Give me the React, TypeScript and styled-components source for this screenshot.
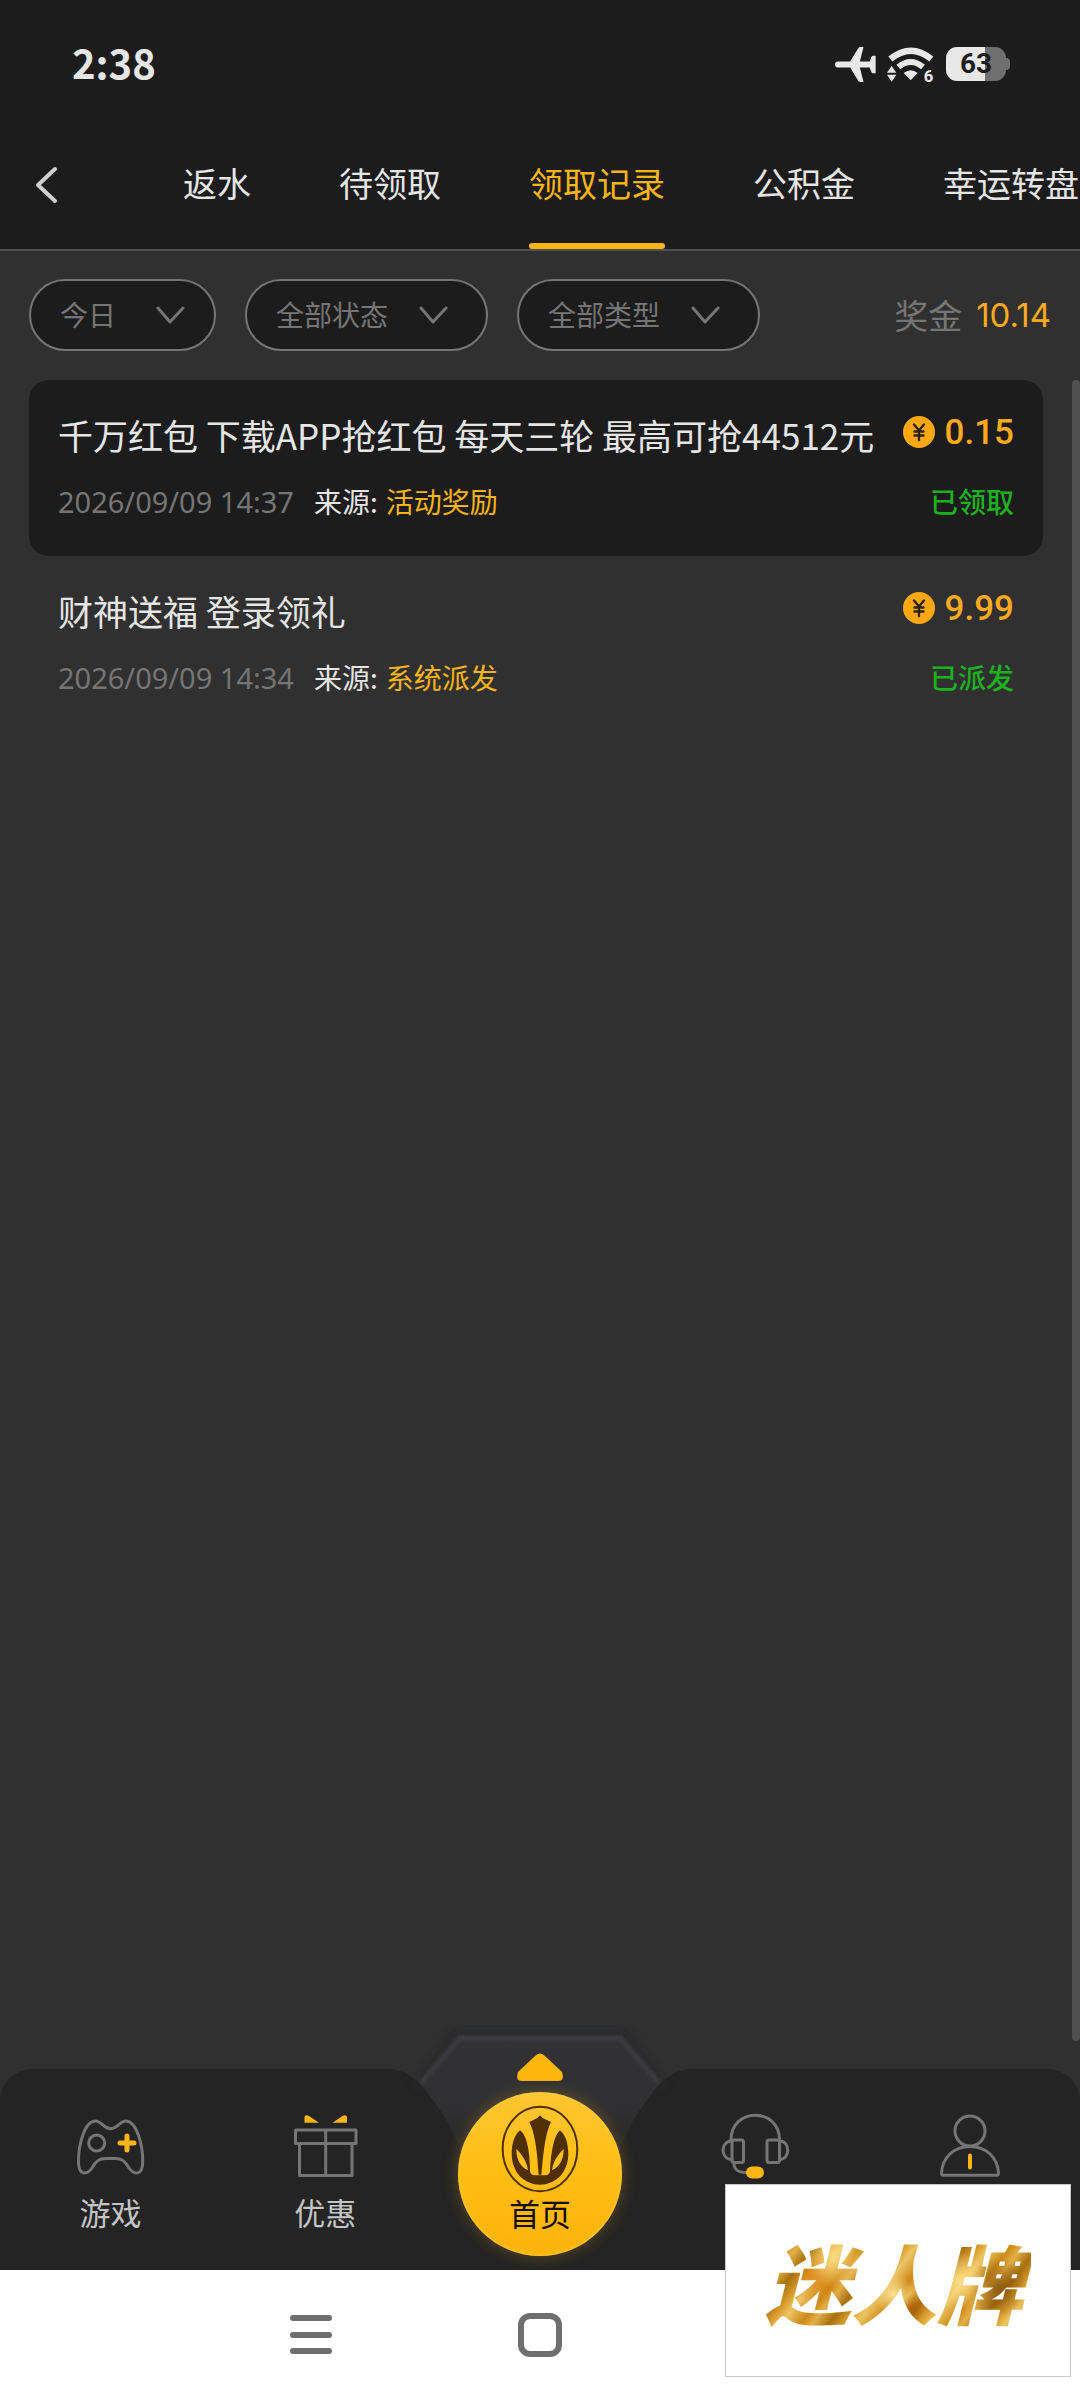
import React, { useState } from "react";
import styled, { createGlobalStyle } from "styled-components";

const color = {
  bar: "#1c1c1c",
  page: "#303030",
  dock: "#242424",
  text: "#e6e6e6",
  muted: "#757575",
  gold: "#fdb515",
  amber: "#ffa91c",
  green: "#1bb01d",
};

const GlobalStyle = createGlobalStyle`
  * { box-sizing: border-box; }
  body {
    margin: 0;
    background: ${color.page};
    color: ${color.text};
    font-family: "Noto Sans CJK SC", "Noto Sans", sans-serif;
    font-size: 28px;
  }
  button, select { font: inherit; color: inherit; }
  svg { display: block; flex: none; }
`;

const Screen = styled.div`
  position: relative;
  display: flex;
  flex-direction: column;
  min-height: 100vh;
  overflow: hidden;
`;

const Header = styled.header`
  background: ${color.bar};
  border-bottom: 2px solid #505050;
`;

const StatusBar = styled.div`
  display: flex;
  align-items: center;
  justify-content: space-between;
  height: 128px;
  padding: 0 70px 0 72px;
`;

const Clock = styled.time`
  padding-bottom: 4px;
  font-size: 40px;
  font-weight: 700;
`;

const StatusIcons = styled.div`
  display: flex;
  align-items: center;
  gap: 11px;
`;

const Battery = styled.div`
  display: flex;
  align-items: center;
`;

const BatteryBody = styled.span<{ $level: number }>`
  display: grid;
  place-items: center;
  width: 60px;
  height: 34px;
  border-radius: 11px;
  background: linear-gradient(
    to right,
    #e8e8e8 ${(p) => p.$level}%,
    #6f6f6f ${(p) => p.$level}%
  );
  color: ${color.bar};
  font-family: Roboto, sans-serif;
  font-size: 28px;
  font-weight: 700;
  line-height: 34px;
`;

const BatteryTip = styled.span`
  width: 4px;
  height: 12px;
  border-radius: 0 4px 4px 0;
  background: #6f6f6f;
`;

const TopRow = styled.div`
  display: flex;
  align-items: stretch;
  height: 121px;
`;

const BackButton = styled.button`
  display: flex;
  align-items: center;
  width: 183px;
  flex: none;
  padding: 0 0 8px 34px;
  border: 0;
  background: none;
`;

const Tabs = styled.nav`
  display: flex;
  flex: 1;
  gap: 88px;
  min-width: 0;
  overflow: hidden;
`;

const Tab = styled.button<{ $active: boolean }>`
  display: flex;
  flex-direction: column;
  flex: none;
  justify-content: space-between;
  padding: 0;
  border: 0;
  background: none;
  color: ${(p) => (p.$active ? color.gold : color.text)};
  font-size: 34px;
  line-height: 109px;

  &::after {
    content: "";
    width: 100%;
    height: 6px;
    border-radius: 3px;
    background: ${(p) => (p.$active ? color.gold : "transparent")};
  }
`;

const Filters = styled.section`
  display: flex;
  align-items: center;
  gap: 29px;
  padding: 28px 29px 29px;
`;

const Pill = styled.label<{ $wide?: boolean }>`
  display: flex;
  align-items: center;
  justify-content: space-between;
  min-width: ${(p) => (p.$wide ? 243 : 187)}px;
  height: 72px;
  padding: 0 ${(p) => (p.$wide ? 38 : 29)}px 0 29px;
  border: 2px solid ${color.muted};
  border-radius: 36px;
  background: ${color.bar};
  color: ${color.muted};
`;

const PillSelect = styled.select`
  appearance: none;
  padding: 0 0 3px;
  border: 0;
  outline: 0;
  background: none;
  line-height: 44px;
`;

const Total = styled.p`
  display: flex;
  align-items: center;
  gap: 14px;
  margin: 0 0 0 auto;
  color: ${color.muted};
  font-size: 34px;
  line-height: 44px;
`;

const TotalValue = styled.span`
  color: ${color.amber};
  font-family: Inter, sans-serif;
  font-size: 33px;
`;

const Content = styled.main`
  display: flex;
  flex: 1;
  gap: 29px;
  padding: 0 0 28px 29px;
`;

const Records = styled.ul`
  flex: 1;
  min-width: 0;
  margin: 0;
  padding: 0;
  list-style: none;
`;

const ScrollThumb = styled.div`
  width: 8px;
  border-radius: 4px;
  background: #505050;
`;

const Record = styled.li`
  display: flex;
  flex-direction: column;
  gap: 22px;
  padding: 32px 29px;
  border-radius: 20px;

  &:nth-child(odd) {
    background: ${color.bar};
  }
`;

const Line = styled.div`
  display: flex;
  align-items: flex-start;
  justify-content: space-between;
  line-height: 45px;
`;

const Title = styled.h2`
  margin: 0;
  font-size: 35px;
  font-weight: 400;
  line-height: 45px;
`;

const Amount = styled.span`
  display: flex;
  align-items: center;
  gap: 10px;
  height: 40px;
  color: ${color.amber};
  font-family: Roboto, sans-serif;
  font-size: 35px;
  font-weight: 500;
`;

const Meta = styled.p`
  display: flex;
  gap: 20px;
  margin: 0;
`;

const When = styled.time`
  color: ${color.muted};
  font-family: "Noto Sans", sans-serif;
  font-size: 29px;
`;

const Source = styled.span`
  display: flex;
  gap: 8px;
`;

const SourceName = styled.span`
  color: ${color.gold};
`;

const Status = styled.span`
  color: ${color.green};
  font-weight: 500;
`;

const Dock = styled.nav`
  position: relative;
  display: grid;
  grid-template-columns: repeat(5, 1fr);
  height: 201px;
  padding: 0 3px;
  border-radius: 32px 32px 0 0;
  background: ${color.dock};
`;

const DockShape = styled.svg`
  position: absolute;
  left: 50%;
  bottom: 0;
  transform: translateX(-50%);
`;

const DockItem = styled.a`
  display: flex;
  flex-direction: column;
  align-items: center;
  gap: 10px;
  padding-top: 41px;
  color: #c4c4c4;
  font-size: 31px;
  line-height: 40px;
  text-decoration: none;
`;

const HomeItem = styled.a`
  position: relative;
  display: flex;
  flex-direction: column;
  align-items: center;
  justify-self: center;
  width: 164px;
  height: 164px;
  margin-top: 23px;
  padding-top: 13px;
  border-radius: 50%;
  background: linear-gradient(#fdc632, #ffbe14 45%, #fcb30c);
  box-shadow: 0 0 16px rgba(253, 181, 21, 0.28), inset 0 0 4px #ffcf45;
  color: #140c00;
  font-size: 31px;
  line-height: 40px;
  text-decoration: none;
`;

const SystemBar = styled.div`
  display: flex;
  align-items: center;
  justify-content: center;
  gap: 157px;
  height: 130px;
  background: #fff;
`;

const SystemButton = styled.button`
  display: grid;
  place-items: center;
  width: 72px;
  height: 72px;
  padding: 0;
  border: 0;
  background: none;
`;

const Brand = styled.aside`
  position: absolute;
  right: 9px;
  bottom: 23px;
  display: flex;
  align-items: center;
  justify-content: center;
  width: 346px;
  height: 193px;
  padding-right: 8px;
  border: 1px solid #c8c8c8;
  background: #fff;
`;

const BrandName = styled.strong`
  padding: 0 8px;
  background:
    radial-gradient(circle at 28% 30%, rgba(255, 226, 140, 0.8), transparent 14%),
    radial-gradient(circle at 22% 46%, rgba(214, 122, 8, 0.8), transparent 12%),
    radial-gradient(circle at 50% 62%, rgba(255, 232, 160, 0.9), transparent 13%),
    radial-gradient(circle at 56% 74%, rgba(176, 92, 4, 0.8), transparent 8%),
    radial-gradient(circle at 74% 50%, rgba(255, 226, 140, 0.9), transparent 14%),
    radial-gradient(circle at 88% 56%, rgba(120, 72, 6, 0.7), transparent 12%),
    repeating-linear-gradient(
      128deg,
      #a8700f 0,
      #dca233 13px,
      #edc566 21px,
      #cd8a17 37px,
      #e3b048 46px,
      #a8700f 59px
    );
  background-clip: text;
  -webkit-background-clip: text;
  color: transparent;
  font-size: 86px;
  font-style: italic;
  font-weight: 900;
  line-height: 114px;
`;

const line = {
  fill: "none",
  stroke: "#757575",
  strokeWidth: 3,
  strokeLinecap: "round" as const,
  strokeLinejoin: "round" as const,
};

const PlaneIcon = () => (
  <svg width="41" height="35" viewBox="43 48 122 104" fill="#e8e8e8" aria-hidden="true">
    <path d="M52 91H88L113 50Q115 48 118 48H128L117 91H146L152 76Q153 74 156 74H164V126H156Q153 126 152 124L146 109H117L128 152H118Q115 152 113 150L88 109H52A9 9 0 0 1 52 91Z" />
  </svg>
);

const WifiIcon = () => (
  <svg
    width="48"
    height="37"
    viewBox="203 47 144 111"
    overflow="visible"
    fill="#e8e8e8"
    aria-hidden="true"
  >
    <g fill="none" stroke="#e8e8e8">
      <path d="M213 86Q275 36 336 86" strokeWidth="19" />
      <path d="M237 110Q274 80 311 110" strokeWidth="18" />
    </g>
    <path d="M253 128Q274 111 295 128L277 147Q274 150 271 147Z" />
    <path d="M217 107L231 127H203Z M203 133H231L217 154Z" />
    <text x="313" y="154" fontSize="50" fontWeight="700" fontFamily="Roboto, sans-serif">
      6
    </text>
  </svg>
);

const BackIcon = () => (
  <svg width="24" height="38" viewBox="0 0 24 38" {...line} stroke="#cfcfcf" strokeWidth="4">
    <path d="M21 3L4 19L21 35" />
  </svg>
);

const DownIcon = () => (
  <svg width="29" height="18" viewBox="0 0 29 18" {...line} aria-hidden="true">
    <path d="M2 2L14 16L27 2" />
  </svg>
);

const CoinIcon = () => (
  <svg width="32" height="32" viewBox="0 0 32 32" aria-hidden="true">
    <circle cx="16" cy="16" r="16" fill="#ffa70f" />
    <path
      d="M11 8.5L16 14.5L21 8.5M16 14.5V24M11.5 15.5H20.5M11.5 19.5H20.5"
      fill="none"
      stroke="#2c2418"
      strokeWidth="2.4"
      strokeLinecap="round"
    />
  </svg>
);

const GameIcon = () => (
  <svg width="72" height="72" viewBox="0 0 72 72" {...line}>
    <path d="M21.7 11C27 11 30 18.7 36.7 18.7S46 11 51.7 11C63 11 69 36 68.7 52C68.5 66 60 65 55 58C51 51 48 48.5 41 48.5H32C25 48.5 22 51 18 58C13 65 4.7 66 4.5 52C4.3 36 10 11 21.7 11Z" />
    <circle cx="22.7" cy="33" r="8" />
    <path d="M46 33H60M53 26V40" stroke={color.gold} strokeWidth="5" />
  </svg>
);

const GiftIcon = () => (
  <svg width="72" height="72" viewBox="0 0 72 72" {...line}>
    <path d="M6.5 20H67V33.5H6.5ZM10.5 33.5V65.5H63V33.5M36.7 20V65.5" />
    <path
      d="M15.5 12.7V7Q16 4 20 6L30 12.7ZM58 12.7V7Q57.5 4 53.5 6L43.5 12.7Z"
      fill={color.gold}
      stroke="none"
    />
  </svg>
);

const ServiceIcon = () => (
  <svg width="72" height="72" viewBox="0 0 72 72" {...line}>
    <path d="M12 30C12 -3 60.5 -3 60.5 30" />
    <rect x="13" y="30" width="11.5" height="22.5" rx="2" />
    <rect x="48" y="30" width="12.5" height="22.5" rx="2" />
    <path d="M13 31C1 31 1 49.5 13 49.5M60.5 31C71.5 31 71.5 49.5 60.5 49.5M15 53C15 60 19 62.5 28 62.5" />
    <rect x="27" y="56.5" width="18" height="12" rx="6" fill={color.gold} stroke="none" />
  </svg>
);

const UserIcon = () => (
  <svg width="72" height="72" viewBox="0 0 72 72" {...line}>
    <circle cx="36" cy="21" r="15" />
    <path d="M9 65.3Q7.5 65.3 7.5 63C8.5 47 20 36.5 36 36.5S63.5 47 64.5 63Q64.5 65.3 63 65.3Z" />
    <path d="M36 45.5V57.5" stroke={color.gold} strokeWidth="4" />
  </svg>
);

const CrestIcon = () => (
  <svg width="78" height="88" viewBox="18 15 234 264" fill="#4f2f00" aria-hidden="true">
    <ellipse cx="135" cy="147" rx="112" ry="127" fill="none" stroke="#4f2f00" strokeWidth="6" />
    <path d="M135 46L143 54L168 66C151 100 146 150 139 224H131C126 150 120 100 103 66L127 54Z" />
    <path d="M75 91C58 105 50 130 50 165C52 220 90 254 135 254S218 220 220 165C220 130 212 105 195 91C178 105 168 150 165 214Q163 226 151 226H119Q107 226 105 214C104 150 96 106 75 91Z" />
    <path
      d="M64 147C80 162 96 185 99 210C78 203 64 180 64 147ZM206 147C190 162 174 185 171 210C192 203 206 180 206 147Z"
      fill="#ffc01c"
    />
  </svg>
);

const DockBackdrop = () => (
  <DockShape width="320" height="245" viewBox="0 0 320 245" aria-hidden="true">
    <defs>
      <linearGradient id="hump" x1="0" y1="0" x2="0" y2="1">
        <stop offset="0" stopColor="#323236" />
        <stop offset="0.5" stopColor="#303032" />
        <stop offset="1" stopColor="#242424" />
      </linearGradient>
      <filter id="soft" x="-20%" y="-50%" width="140%" height="200%">
        <feGaussianBlur stdDeviation="3" />
      </filter>
      <filter id="edge">
        <feGaussianBlur stdDeviation="1.5" />
      </filter>
    </defs>
    <path d="M2 43C20 43 34 50 48 68L92 130H228L272 68C286 50 300 43 318 43Z" fill={color.page} />
    <path
      d="M34 64L75 7H245L286 64"
      fill="none"
      stroke="#27282b"
      strokeWidth="7"
      opacity="0.7"
      filter="url(#soft)"
    />
    <path d="M41 58L80 11H240L279 58L256 90L226 150H94L64 90Z" fill="url(#hump)" />
    <path d="M41 58L80 13H240L279 58" fill="none" stroke="#3b3b40" strokeWidth="5" filter="url(#edge)" />
    <path
      d="M165 31L182 47Q185 56 178 56H142Q135 56 138 47L155 31Q160 26 165 31Z"
      fill="#ffb60a"
    />
  </DockShape>
);

const MenuIcon = () => (
  <svg width="44" height="44" viewBox="0 0 44 44" {...line} stroke="#6f6f6f" strokeWidth="6">
    <path d="M4 5H40M4 22H40M4 38H40" />
  </svg>
);

const SquareIcon = () => (
  <svg width="44" height="44" viewBox="0 0 44 44" {...line} stroke="#6f6f6f" strokeWidth="6">
    <rect x="3" y="3" width="38" height="38" rx="9" />
  </svg>
);

const tabs = ["返水", "待领取", "领取记录", "公积金", "幸运转盘"];

const filters = [
  { label: "日期", value: "今日", wide: false },
  { label: "状态", value: "全部状态", wide: true },
  { label: "类型", value: "全部类型", wide: true },
];

const records = [
  {
    title: "千万红包 下载APP抢红包 每天三轮 最高可抢44512元",
    amount: "0.15",
    when: "2026/09/09 14:37",
    source: "活动奖励",
    status: "已领取",
  },
  {
    title: "财神送福 登录领礼",
    amount: "9.99",
    when: "2026/09/09 14:34",
    source: "系统派发",
    status: "已派发",
  },
];

export default function App() {
  const [active, setActive] = useState("领取记录");

  return (
    <Screen>
      <GlobalStyle />
      <Header>
        <StatusBar>
          <Clock>2:38</Clock>
          <StatusIcons>
            <PlaneIcon />
            <WifiIcon />
            <Battery>
              <BatteryBody $level={65}>63</BatteryBody>
              <BatteryTip />
            </Battery>
          </StatusIcons>
        </StatusBar>
        <TopRow>
          <BackButton aria-label="返回">
            <BackIcon />
          </BackButton>
          <Tabs>
            {tabs.map((t) => (
              <Tab key={t} $active={t === active} onClick={() => setActive(t)}>
                {t}
              </Tab>
            ))}
          </Tabs>
        </TopRow>
      </Header>

      <Filters>
        {filters.map((f) => (
          <Pill key={f.label} $wide={f.wide}>
            <PillSelect aria-label={f.label}>
              <option>{f.value}</option>
            </PillSelect>
            <DownIcon />
          </Pill>
        ))}
        <Total>
          奖金 <TotalValue>10.14</TotalValue>
        </Total>
      </Filters>

      <Content>
        <Records>
          {records.map((r) => (
            <Record key={r.when}>
              <Line>
                <Title>{r.title}</Title>
                <Amount>
                  <CoinIcon />
                  {r.amount}
                </Amount>
              </Line>
              <Line>
                <Meta>
                  <When>{r.when}</When>
                  <Source>
                    来源:<SourceName>{r.source}</SourceName>
                  </Source>
                </Meta>
                <Status>{r.status}</Status>
              </Line>
            </Record>
          ))}
        </Records>
        <ScrollThumb />
      </Content>

      <Dock>
        <DockBackdrop />
        <DockItem href="#games">
          <GameIcon />
          游戏
        </DockItem>
        <DockItem href="#offers">
          <GiftIcon />
          优惠
        </DockItem>
        <HomeItem href="#home">
          <CrestIcon />
          首页
        </HomeItem>
        <DockItem href="#service" aria-label="客服">
          <ServiceIcon />
        </DockItem>
        <DockItem href="#me" aria-label="我的">
          <UserIcon />
        </DockItem>
      </Dock>

      <SystemBar>
        <SystemButton aria-label="最近任务">
          <MenuIcon />
        </SystemButton>
        <SystemButton aria-label="主屏幕">
          <SquareIcon />
        </SystemButton>
        <SystemButton aria-label="返回上一页" />
      </SystemBar>

      <Brand>
        <BrandName>迷人牌</BrandName>
      </Brand>
    </Screen>
  );
}
